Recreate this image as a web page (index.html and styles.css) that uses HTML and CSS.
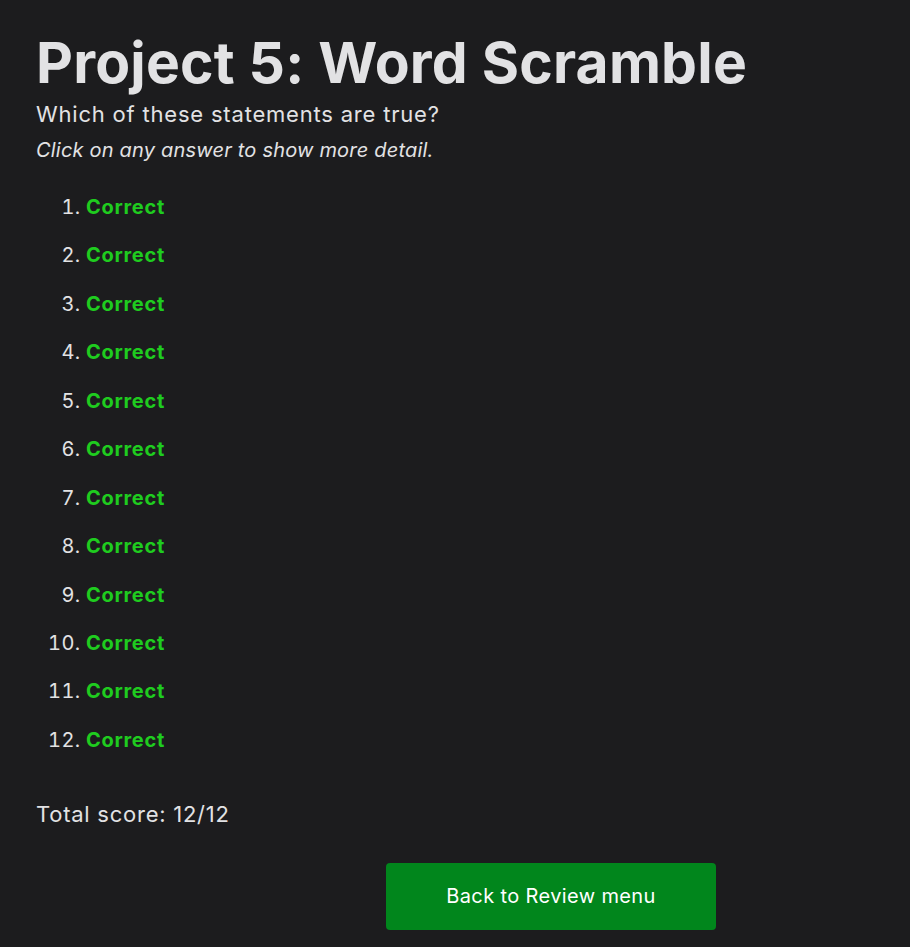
FILE: index.html
```html
<!DOCTYPE html>
<html>
<head>
<meta charset="utf-8">
<link rel="stylesheet" href="styles.css">
</head>
<body>
<main class="page">
  <h1 class="title">Project 5: Word Scramble</h1>
  <p class="question">Which of these statements are true?</p>
  <p class="hint">Click on any answer to show more detail.</p>
  <ol class="answers">
    <li><span class="correct">Correct</span></li>
    <li><span class="correct">Correct</span></li>
    <li><span class="correct">Correct</span></li>
    <li><span class="correct">Correct</span></li>
    <li><span class="correct">Correct</span></li>
    <li><span class="correct">Correct</span></li>
    <li><span class="correct">Correct</span></li>
    <li><span class="correct">Correct</span></li>
    <li><span class="correct">Correct</span></li>
    <li><span class="correct">Correct</span></li>
    <li><span class="correct">Correct</span></li>
    <li><span class="correct">Correct</span></li>
  </ol>
  <p class="score">Total score: 12/12</p>
  <div class="actions">
    <button class="back">Back to Review menu</button>
  </div>
</main>
</body>
</html>
```

FILE: styles.css
```css
html, body {
  margin: 0;
  background: #1c1c1e;
}
body {
  font-family: Inter, "Noto Sans", sans-serif;
  color: #e2e2e4;
}
.page {
  padding: 28px 36px 0 36px;
}
.title {
  margin: 0;
  font-size: 57px;
  font-weight: 700;
  line-height: 70px;
  letter-spacing: 0.2px;
}
.question {
  margin: 1px 0 0 0;
  font-size: 22px;
  line-height: 30px;
  letter-spacing: 0.8px;
}
.hint {
  margin: 6px 0 0 0;
  font-size: 20px;
  font-style: italic;
  line-height: 30px;
  letter-spacing: 0.2px;
}
.answers {
  margin: 30px 0 0 0;
  padding-left: 50px;
  font-size: 20px;
  line-height: 24px;
  letter-spacing: 0.3px;
}
.answers li {
  margin-bottom: 24.45px;
  padding-left: 0;
}
.answers li:last-child {
  margin-bottom: 0;
}
.correct {
  color: #1fcc1f;
  font-weight: 700;
  letter-spacing: 0.7px;
}
.score {
  margin: 47px 0 0 0;
  font-size: 22px;
  line-height: 30px;
  letter-spacing: 0.75px;
}
.actions {
  margin-top: 34px;
  padding-left: 350px;
}
.back {
  width: 330px;
  height: 67px;
  border: none;
  border-radius: 4px;
  background: #01861c;
  color: #ffffff;
  font-family: Inter, "Noto Sans", sans-serif;
  font-size: 20px;
  letter-spacing: 0.37px;
}
```
